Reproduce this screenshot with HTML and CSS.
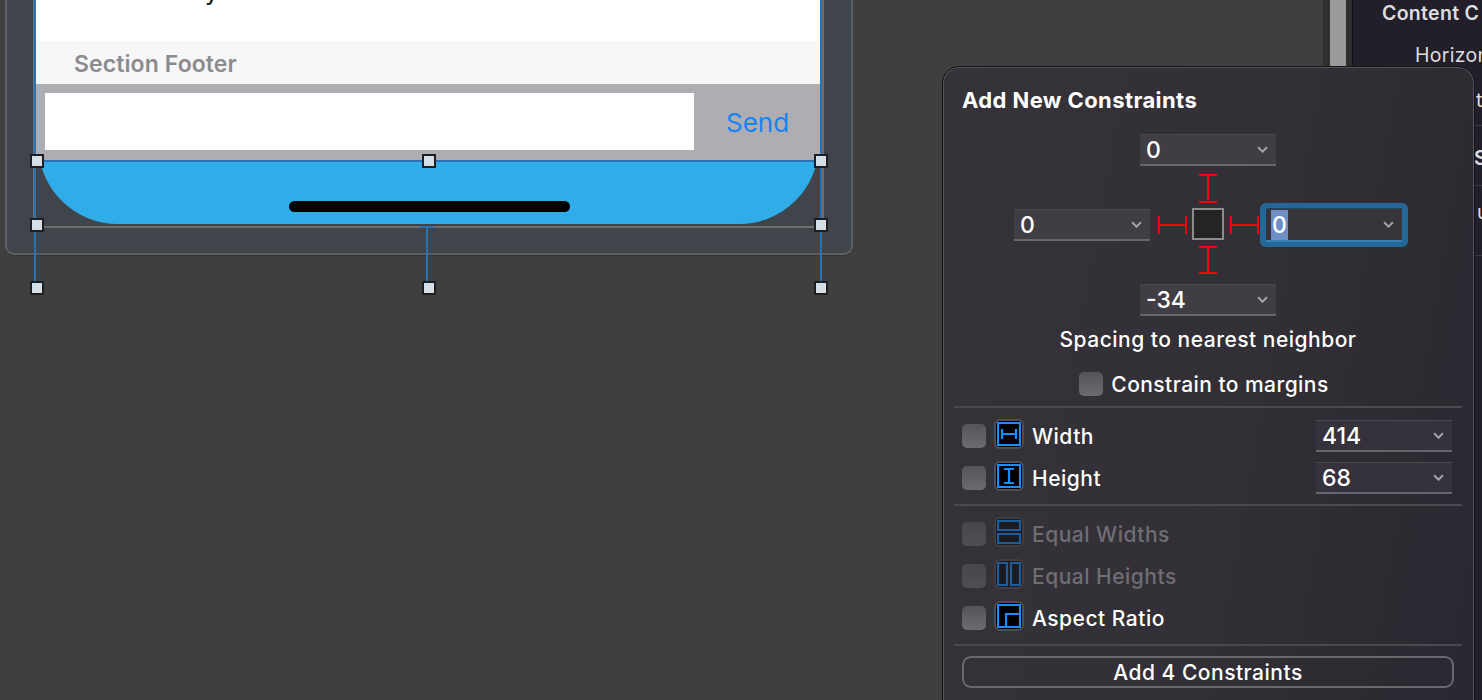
FILE: index.html
```html
<!DOCTYPE html>
<html lang="en">
<head>
<meta charset="utf-8">
<title>Add New Constraints</title>
<link rel="stylesheet" href="styles.css">
</head>
<body>
<div class="window">
  <main class="canvas">
    <div class="device">
      <div class="device-frame">
        <div class="screen">
          <div class="cell"><span class="cell-text">Content Only</span></div>
          <div class="footer">Section Footer</div>
          <div class="input-bar">
            <div class="text-field"></div>
            <span class="send">Send</span>
          </div>
          <div class="safe-area"><div class="home-bar"></div></div>
        </div>
      </div>
    </div>
    <i class="sel-line v l1"></i>
    <i class="sel-line v l2"></i>
    <i class="sel-line h l3"></i>
    <i class="sel-line v l4"></i>
    <i class="sel-line h l5"></i>
    <i class="handle h1"></i><i class="handle h2"></i><i class="handle h3"></i>
    <i class="handle h4"></i><i class="handle h5"></i>
    <i class="handle h6"></i><i class="handle h7"></i><i class="handle h8"></i>
  </main>
  <div class="gutter"><div class="scroll-thumb"></div></div>
  <aside class="inspector">
    <div class="insp-row insp-head">Content C</div>
    <div class="insp-row insp-horizontal">Horizon</div>
    <div class="insp-row insp-t">t</div>
    <div class="insp-row insp-s">S</div>
    <div class="insp-row insp-u">u</div>
  </aside>
</div>

<section class="popover">
  <h1 class="title">Add New Constraints</h1>
  <div class="pin">
    <div class="combo"><span>0</span><svg class="chev" viewBox="0 0 10 6"><path d="M1 1l4 4 4-4"/></svg></div>
    <svg class="strut strut-top" width="20" height="30" viewBox="0 0 20 30"><path d="M1 1h18M10 1v27M1 28h18"/></svg>
    <div class="pin-mid">
      <div class="combo"><span>0</span><svg class="chev" viewBox="0 0 10 6"><path d="M1 1l4 4 4-4"/></svg></div>
      <svg class="strut strut-left" width="30" height="20" viewBox="0 0 30 20"><path d="M1 1v18M1 10h27M28 1v18"/></svg>
      <div class="pin-box"></div>
      <svg class="strut strut-right" width="30" height="20" viewBox="0 0 30 20"><path d="M1 1v18M1 10h27M28 1v18"/></svg>
      <div class="focus-ring">
        <div class="combo combo-focus"><span class="selected">0</span><svg class="chev" viewBox="0 0 10 6"><path d="M1 1l4 4 4-4"/></svg></div>
      </div>
    </div>
    <svg class="strut strut-bottom" width="20" height="28" viewBox="0 0 20 28"><path d="M1 1h18M10 1v26M1 27h18"/></svg>
    <div class="combo"><span>-34</span><svg class="chev" viewBox="0 0 10 6"><path d="M1 1l4 4 4-4"/></svg></div>
  </div>
  <p class="spacing">Spacing to nearest neighbor</p>
  <label class="margins"><i class="check"></i><span>Constrain to margins</span></label>
  <hr class="rule rule-a">
  <div class="row">
    <i class="check"></i>
    <span class="tile"><svg viewBox="0 0 24 24"><path d="M1 1h22v22H1zM5 7v10M19 7v10M5 12h14"/></svg></span>
    <span class="row-label">Width</span>
    <div class="combo combo-row"><span>414</span><svg class="chev" viewBox="0 0 10 6"><path d="M1 1l4 4 4-4"/></svg></div>
  </div>
  <div class="row">
    <i class="check"></i>
    <span class="tile"><svg viewBox="0 0 24 24"><path d="M1 1h22v22H1zM7 5h10M7 19h10M12 5v14"/></svg></span>
    <span class="row-label">Height</span>
    <div class="combo combo-row"><span>68</span><svg class="chev" viewBox="0 0 10 6"><path d="M1 1l4 4 4-4"/></svg></div>
  </div>
  <hr class="rule rule-b">
  <div class="row row-dim">
    <i class="check"></i>
    <span class="tile"><svg viewBox="0 0 24 24"><path d="M1 1h22v9H1zM1 14h22v9H1z"/></svg></span>
    <span class="row-label">Equal Widths</span>
  </div>
  <div class="row row-dim">
    <i class="check"></i>
    <span class="tile"><svg viewBox="0 0 24 24"><path d="M1 1h9v22H1zM14 1h9v22h-9z"/></svg></span>
    <span class="row-label">Equal Heights</span>
  </div>
  <div class="row">
    <i class="check"></i>
    <span class="tile"><svg viewBox="0 0 24 24"><path d="M1 1h22v22H1zM9 23V10h14"/></svg></span>
    <span class="row-label">Aspect Ratio</span>
  </div>
  <hr class="rule rule-c">
  <button class="add" type="button">Add 4 Constraints</button>
</section>
</body>
</html>
```
FILE: styles.css
```css
* { box-sizing: border-box; }
html, body { margin: 0; height: 100%; overflow: hidden; }
body {
  background: #3f3f3f;
  font-family: Inter, "Noto Sans", "Liberation Sans", sans-serif;
  color: #fff;
}
.window { display: flex; height: 700px; width: 1482px; }

/* canvas */
.canvas { position: relative; width: 1323px; flex: none; background: #3f3f3f; overflow: hidden; }
.device {
  position: absolute; left: 5px; top: -60px; width: 848px; height: 315px;
  background: #40454c; border: 2px solid #5d6064; border-top: 0;
  border-radius: 0 0 9px 9px; padding: 0 27px 25px 26px;
  box-shadow: 0 1px 0 #333;
}
.device-frame {
  height: 100%;
  border: 2px solid #6c6e70; border-top: 0;
  padding: 0 2px 2px 1px;
}
.screen { height: 100%; display: flex; flex-direction: column; }
.cell { height: 101px; background: #fff; color: #222; position: relative; overflow: hidden; flex: none; }
.cell-text { position: absolute; left: 38px; top: 38px; font-size: 23px; font-weight: 500; }
.footer {
  height: 43px; flex: none; background: #f7f7f7; color: #8c8c8f;
  font-size: 23px; font-weight: 600; letter-spacing: .1px; padding: 10px 0 0 38px; line-height: 27px;
}
.input-bar {
  height: 77px; flex: none; background: #aeadb1;
  display: flex; align-items: flex-start; padding: 9px 0 0 9px;
}
.text-field { width: 649px; height: 57px; background: #fff; flex: none; }
.send { color: #1684f6; font-size: 26px; line-height: 59px; margin-left: 32px; }
.safe-area {
  flex: 1; background: #30ade8;
  clip-path: inset(-20px 1px 0 2px round 0 0 80px 80px);
  display: flex; justify-content: center; align-items: flex-start; padding-top: 40px;
}
.home-bar { width: 281px; height: 11px; background: #000; border-radius: 6px; margin-left: 3px; }

/* selection overlay */
.sel-line { position: absolute; background: #2a72b5; display: block; }
.sel-line.v { width: 2px; }
.sel-line.h { height: 2px; }
.l1 { left: 34px; top: 0; height: 288px; }
.l2 { left: 820px; top: 0; height: 288px; }
.l3 { left: 36px; top: 160px; width: 784px; }
.l4 { left: 426px; top: 227px; height: 61px; }
.l5 { left: 420px; top: 226px; width: 14px; }
.handle {
  position: absolute; width: 14px; height: 14px; display: block;
  background: linear-gradient(135deg, #cfe0ee, #dcdcdc);
  border: 2px solid #1c1f22;
}
.h1 { left: 30px; top: 154px; }
.h2 { left: 422px; top: 154px; }
.h3 { left: 814px; top: 154px; }
.h4 { left: 30px; top: 218px; }
.h5 { left: 814px; top: 218px; }
.h6 { left: 30px; top: 281px; }
.h7 { left: 422px; top: 281px; }
.h8 { left: 814px; top: 281px; }

/* strip + inspector */
.gutter { width: 29px; flex: none; background: #2e302e; padding-left: 7px; }
.scroll-thumb { width: 16px; height: 100%; background: #9a9a9a; }
.inspector { flex: 1; background: #221e2a; border-left: 1px solid #111; overflow: hidden; color: #dddde0; }
.insp-row { white-space: nowrap; font-size: 19.5px; line-height: 27px; }
.insp-head { font-weight: 600; padding-left: 29px; letter-spacing: .3px; height: 42px; }
.insp-horizontal { padding-left: 62px; letter-spacing: .3px; height: 27px; }
.insp-t, .insp-s, .insp-u { border-bottom: 1px solid #3d3a44; }
.insp-t { height: 57px; padding: 18px 0 0 123px; }
.insp-s { height: 60px; padding: 19px 0 0 121px; font-weight: 600; }
.insp-u { height: 70px; padding: 13px 0 0 124px; }

/* popover */
.popover {
  position: absolute; left: 942px; top: 66px; width: 533px; height: 660px;
  background: linear-gradient(100deg, #353339, #322f36 55%, #2b2730);
  border: 1px solid #141316; box-shadow: inset 0 0 0 1px #56545b;
  border-radius: 17px; padding: 19px 12px 0 11px;
  display: flex; flex-direction: column;
}
.title { margin: 0 0 0 8px; font-size: 22px; letter-spacing: .4px; line-height: 28px; font-weight: 700; }
.pin { display: flex; flex-direction: column; align-items: center; margin-top: 20px; }
.pin-mid { display: flex; align-items: center; height: 32px; margin: 0; }
.combo {
  width: 136px; height: 32px; flex: none; display: flex; align-items: center; justify-content: space-between;
  padding: 0 8px 0 6px; background: #403d44; border-bottom: 2px solid #68666c; font-size: 23px; font-weight: 500; line-height: 30px;
  border-top: 1px solid #4a484e;
}
.chev { width: 11px; height: 7px; fill: none; stroke: #a5a3a8; stroke-width: 1.8; }
.strut { fill: none; stroke: #f2030c; stroke-width: 2; flex: none; display: block; }
.strut-top { margin: 8px 0 5px; }
.strut-bottom { margin: 5px 0 10px; }
.strut-left { margin: 0 4px 0 8px; }
.strut-right { margin: 0 0 0 6px; }
.pin-box { width: 32px; height: 32px; background: #242424; border: 2px solid #8c8c8c; flex: none; margin-bottom: 2px; }
.focus-ring { padding: 5px 6px; background: #24689a; border-radius: 6px; margin: 0 -6px 0 0; height: 44px; display: flex; }
.combo-focus { height: 34px; background: #38343c; border-bottom-color: #3a80b4; border-top-color: #1d4868; padding-left: 5px; }
.selected { background: #6d8fc4; padding: 0 1px; line-height: 30px; }
.spacing { margin: 10px 0 0; text-align: center; font-size: 21px; letter-spacing: .5px; line-height: 28px; font-weight: 500; }
.margins { display: flex; align-items: center; justify-content: center; gap: 8px; margin-top: 17px; padding-right: 8px; font-size: 21px; letter-spacing: .45px; font-weight: 500; height: 26px; }
.check { display: block; width: 24px; height: 24px; border-radius: 5px; background: linear-gradient(#55545a, #6c6b70); flex: none; }
.rule { border: 0; height: 2px; background: #4b4950; margin: 9px 0 0; flex: none; width: 508px; }
.rule-a { margin-top: 9px; }
.rule-b { margin-top: 5px; }
.rule-c { margin-top: 5px; }
.row { display: flex; align-items: center; height: 42px; padding-left: 8px; flex: none; }
.rule-a + .row { margin-top: 7px; }
.rule-b + .row { margin-top: 7px; }
.tile {
  width: 30px; height: 30px; margin-left: 8px; border-radius: 6px; border: 2px solid #4e4d52;
  background: #000; display: flex; align-items: center; justify-content: center; flex: none; margin-top: -4px;
}
.tile svg { width: 24px; height: 24px; fill: none; stroke: #1a8cff; stroke-width: 2.2; }
.row-label { margin-left: 8px; font-size: 21px; letter-spacing: .5px; font-weight: 500; flex: 1; }
.combo-row { margin-right: 10px; background: #36323b; }
.row-dim .check { background: linear-gradient(#47464b, #4f4e53); }
.row-dim .tile { background: #1c1c20; border-color: #3f3e43; }
.row-dim .tile svg { stroke: #1f5c9c; }
.row-dim .row-label { color: #6f6e73; }
.add {
  margin: 10px 0 0 8px; width: 492px; height: 32px; flex: none; padding: 1px 0 0;
  background: transparent; border: 2px solid #6a686e; border-radius: 9px;
  color: #fff; font: 500 21px/28px Inter, "Noto Sans", sans-serif; letter-spacing: .5px;
}
```
